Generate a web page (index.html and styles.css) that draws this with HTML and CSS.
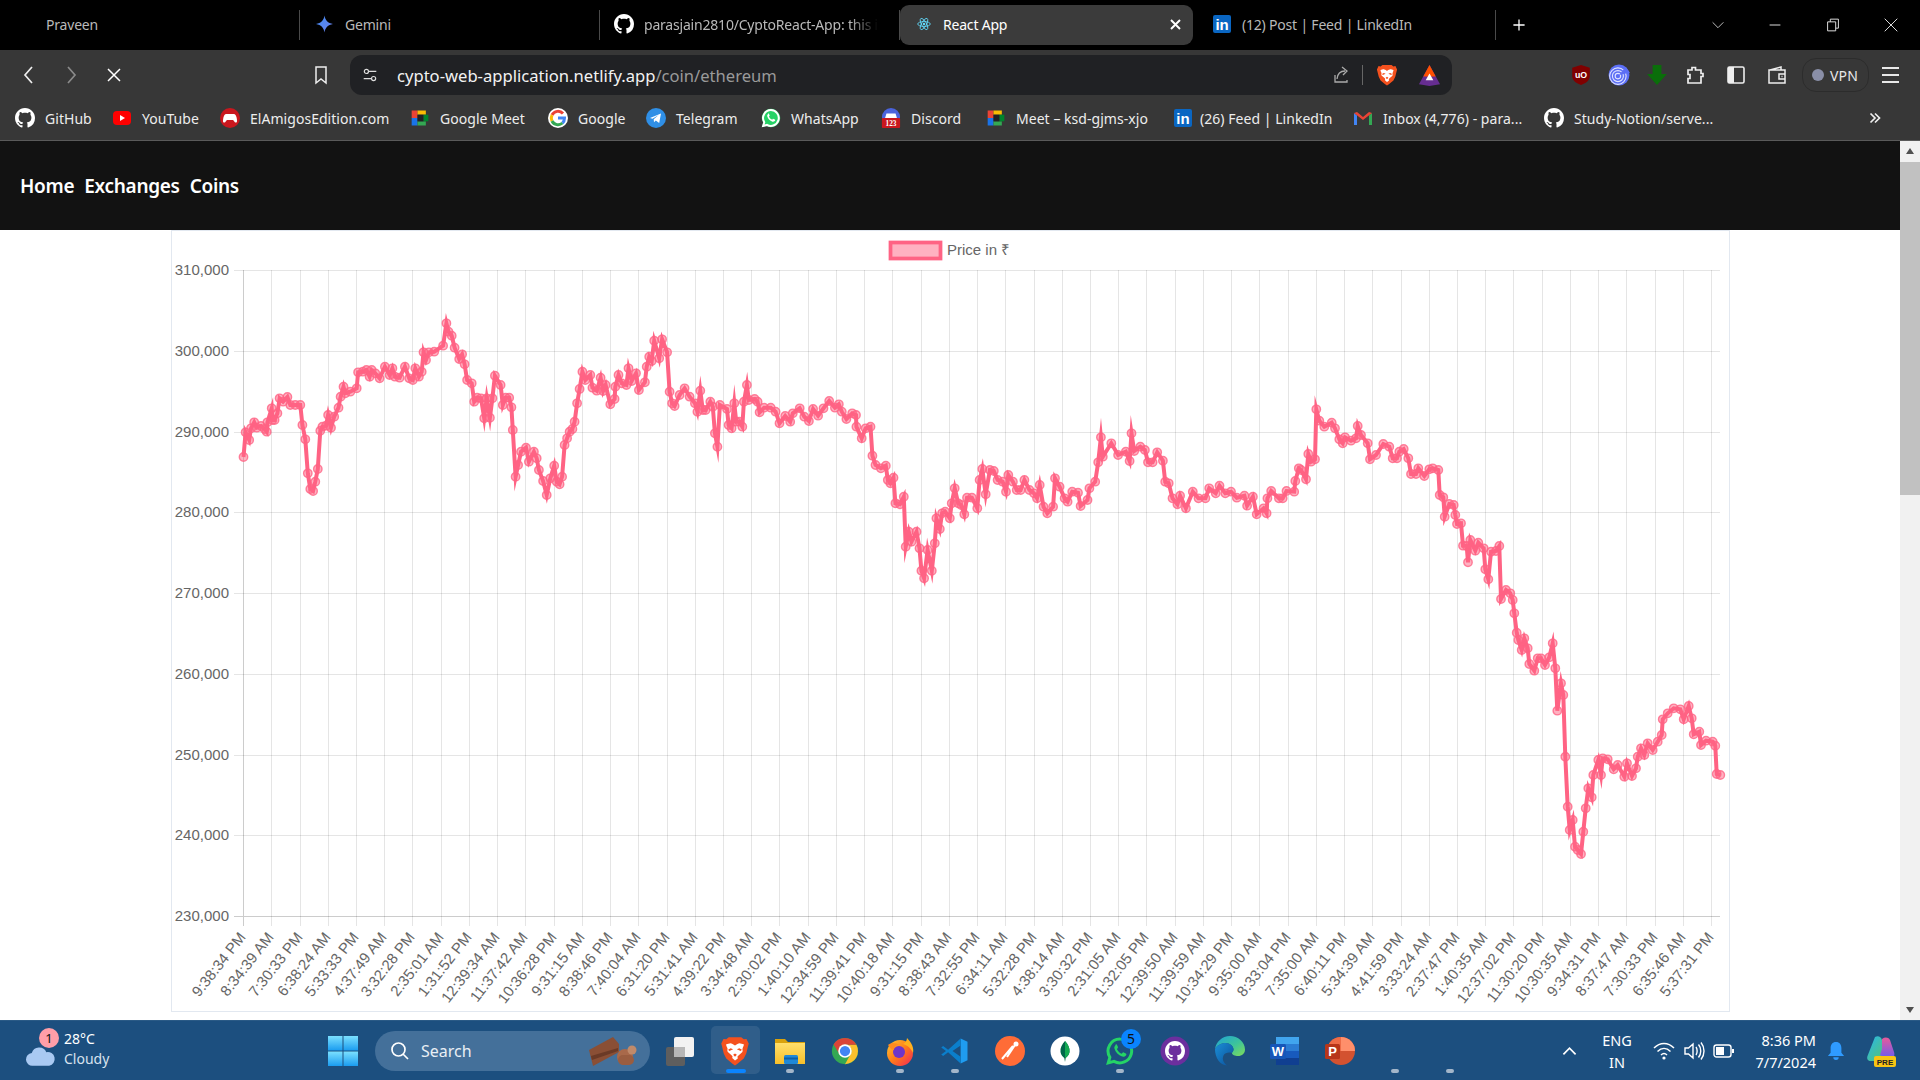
FILE: index.html
```html
<!DOCTYPE html>
<html lang="en">
<head>
<meta charset="utf-8">
<title>React App</title>
<link rel="stylesheet" href="styles.css">
</head>
<body>
<svg class="sprite" aria-hidden="true">
  <defs>
    <linearGradient id="gem" x1="0" y1="0" x2="1" y2="1"><stop offset="0" stop-color="#3f8cf5"/><stop offset="1" stop-color="#6f7fe8"/></linearGradient>
    <linearGradient id="fox" x1="0" y1="0" x2="1" y2="1"><stop offset="0" stop-color="#ffcb2e"/><stop offset=".5" stop-color="#ff7a1a"/><stop offset="1" stop-color="#f0245a"/></linearGradient>
    <linearGradient id="edge" x1="0" y1="0" x2="1" y2="1"><stop offset="0" stop-color="#1fa2d8"/><stop offset=".55" stop-color="#3dc49a"/><stop offset="1" stop-color="#7fdc5a"/></linearGradient>
    <linearGradient id="edge2" x1="0" y1="0" x2="1" y2="1"><stop offset="0" stop-color="#1b8fd6"/><stop offset="1" stop-color="#0b4f9a"/></linearGradient>
    <linearGradient id="win" x1="0" y1="0" x2="0" y2="1"><stop offset="0" stop-color="#7be0ff"/><stop offset="1" stop-color="#1a9cf0"/></linearGradient>
    <linearGradient id="folder" x1="0" y1="0" x2="0" y2="1"><stop offset="0" stop-color="#ffdf6b"/><stop offset="1" stop-color="#f7bf2a"/></linearGradient>
    <linearGradient id="copiL" x1="0" y1="0" x2="1" y2="1"><stop offset="0" stop-color="#25b8f0"/><stop offset="1" stop-color="#5ac36a"/></linearGradient>
    <linearGradient id="copiR" x1="0" y1="0" x2="0" y2="1"><stop offset="0" stop-color="#e85a9a"/><stop offset="1" stop-color="#6b5cf0"/></linearGradient>
    <symbol id="i-github" viewBox="0 0 16 16"><path fill="currentColor" d="M8 0C3.58 0 0 3.58 0 8c0 3.54 2.29 6.53 5.47 7.59.4.07.55-.17.55-.38 0-.19-.01-.82-.01-1.49-2.01.37-2.53-.49-2.69-.94-.09-.23-.48-.94-.82-1.13-.28-.15-.68-.52-.01-.53.63-.01 1.08.58 1.23.82.72 1.21 1.87.87 2.33.66.07-.52.28-.87.51-1.07-1.78-.2-3.64-.89-3.64-3.95 0-.87.31-1.59.82-2.15-.08-.2-.36-1.02.08-2.12 0 0 .67-.21 2.2.82.64-.18 1.32-.27 2-.27.68 0 1.36.09 2 .27 1.53-1.04 2.2-.82 2.2-.82.44 1.1.16 1.92.08 2.12.51.56.82 1.27.82 2.15 0 3.07-1.87 3.75-3.65 3.95.29.25.54.73.54 1.48 0 1.07-.01 1.93-.01 2.2 0 .21.15.46.55.38A8.013 8.013 0 0016 8c0-4.42-3.58-8-8-8z"/></symbol>
    <symbol id="i-linkedin" viewBox="0 0 20 20"><rect x="1" y="1" width="18" height="18" rx="2" fill="#0a66c2"/><text x="10" y="16" class="svg-in">in</text></symbol>
    <symbol id="i-brave" viewBox="0 0 24 24"><path fill="#f4511e" d="M7 1h10l2 1.6 2.2-.3L23 6l-.7 2.6L21 14l-2 4-5 4.2-2 1.3-2-1.3L5 18l-2-4-1.3-5.4L1 6l1.8-3.7 2.2.3z"/><path fill="#fff" d="M12 7.5c1.2-.6 2.8-1.7 3.6-1.7.8 0 2.5.7 3.4.8.3.6-.4 2-.9 3.2-.5 1.2.6 2-.4 3.2l-2.7 2.4-1 1 .2 1.5L12 19.5l-2.2-1.9.2-1.5-1-1-2.7-2.4c-1-1.2.1-2-.4-3.2C5.4 8.6 4.7 7.2 5 6.6c.9-.1 2.6-.8 3.4-.8.8 0 2.4 1.1 3.6 1.7z"/><path fill="#f4511e" d="M10.5 10.5l-3 1.5-1-1 2-1.2zM13.5 10.5l3 1.5 1-1-2-1.2zM10.5 15l1.5-1 1.5 1-1.5 1.5z"/></symbol>
    <symbol id="i-wa" viewBox="0 0 24 24"><path fill="none" stroke="currentColor" stroke-width="2.4" d="M12 2.5a9.5 9.5 0 0 0-8.100 14.500L2.600 21.500l4.600-1.200A9.500 9.500 0 1 0 12 2.500z"/><path fill="currentColor" d="M8.600 7.200c-.9.700-1.400 1.800-1 3 .8 2.800 3.200 5.300 6.100 6.200 1.400.4 2.700-.2 3.300-1.300.3-.5 0-.9-.4-1.200l-1.600-.8c-.5-.2-.8 0-1.100.4l-.5.6c-2-.8-3.100-2-3.900-3.800l.6-.6c.3-.4.4-.7.2-1.100l-.8-1.600c-.3-.5-.6-.5-.9-.8z"/></symbol>
    <symbol id="i-meet" viewBox="0 0 24 24"><rect x="2" y="3" width="7" height="9" fill="#ea4335"/><rect x="2" y="12" width="7" height="9" fill="#1a73e8"/><rect x="9" y="3" width="10" height="5" fill="#fbbc04"/><rect x="9" y="16" width="10" height="5" fill="#34a853"/><rect x="16" y="8" width="6" height="8" fill="#00832d"/><rect x="9" y="8" width="7" height="8" fill="#202124"/></symbol>
    <symbol id="i-x" viewBox="0 0 20 20"><path fill="none" stroke="currentColor" d="M4 4l12 12M16 4L4 16"/></symbol>
    <symbol id="i-chrome" viewBox="0 0 24 24"><circle cx="12" cy="12" r="10.5" fill="#34a853"/><path fill="#fbc02d" d="M12 7h9.100A10.500 10.500 0 0 1 12 22.500l4.400-8A5 5 0 0 0 12 7z"/><path fill="#db4437" d="M2.900 6.800A10.500 10.500 0 0 1 21.100 7H12a5 5 0 0 0-4.400 7.500z"/><circle cx="12" cy="12" r="5.4" fill="#fff"/><circle cx="12" cy="12" r="4.100" fill="#4285f4"/></symbol>
  </defs>
</svg>

<div class="tabstrip">
  <div class="tab tab-profile"><span class="tab-title">Praveen</span></div>
  <div class="tab">
    <svg class="ico18" viewBox="0 0 18 18"><path fill="url(#gem)" d="M9 0c.8 5 3.500 8 9 9-5.500 1-8.200 4-9 9-.8-5-3.500-8-9-9 5.500-1 8.200-4 9-9z"/></svg>
    <span class="tab-title">Gemini</span>
  </div>
  <div class="tab tab-gh">
    <svg class="ico20 white"><use href="#i-github"/></svg>
    <span class="tab-title fade">parasjain2810/CyptoReact-App: this i</span>
  </div>
  <div class="tab tab-active">
    <svg class="ico14" viewBox="0 0 20 20"><g fill="none" stroke="#61dafb" stroke-width="1.2"><ellipse cx="10" cy="10" rx="9" ry="3.500"/><ellipse cx="10" cy="10" rx="9" ry="3.500" transform="rotate(60 10 10)"/><ellipse cx="10" cy="10" rx="9" ry="3.500" transform="rotate(120 10 10)"/></g><circle cx="10" cy="10" r="1.800" fill="#61dafb"/></svg>
    <span class="tab-title">React App</span>
    <svg class="tab-close"><use href="#i-x"/></svg>
  </div>
  <div class="tab tab-li">
    <svg class="ico20"><use href="#i-linkedin"/></svg>
    <span class="tab-title">(12) Post | Feed | LinkedIn</span>
  </div>
  <svg class="newtab" viewBox="0 0 20 20"><path fill="none" stroke="#fff" stroke-width="1.6" d="M10 3v14M3 10h14"/></svg>
  <div class="winctl">
    <svg viewBox="0 0 20 20"><path fill="none" stroke="#bbb" stroke-width="1.1" d="M4 7l6 6 6-6"/></svg>
    <svg viewBox="0 0 20 20"><path fill="none" stroke="#ddd" stroke-width="1.1" d="M4 10h12"/></svg>
    <svg viewBox="0 0 20 20"><path fill="none" stroke="#ddd" stroke-width="1.1" d="M4 6.500h9v10H4zM7 6.500V3.500h9v10h-3"/></svg>
    <svg viewBox="0 0 20 20"><path fill="none" stroke="#ddd" stroke-width="1.1" d="M3 3l14 14M17 3L3 17"/></svg>
  </div>
</div>

<div class="toolbar">
  <div class="navbtn"><svg viewBox="0 0 20 20"><path fill="none" stroke="#eee" stroke-width="1.7" d="M13 2L6 10l7 8"/></svg></div>
  <div class="navbtn"><svg viewBox="0 0 20 20"><path fill="none" stroke="#8a8a8a" stroke-width="1.7" d="M7 2l7 8-7 8"/></svg></div>
  <div class="navbtn navstop"><svg class="white"><use href="#i-x"/></svg></div>
  <div class="navbtn bookmark"><svg viewBox="0 0 20 20"><path fill="none" stroke="#eee" stroke-width="1.5" d="M5 2h10v16l-5-4-5 4z"/></svg></div>
  <div class="omnibox">
    <svg class="tune" viewBox="0 0 20 20"><g fill="none" stroke="#ddd" stroke-width="1.3"><circle cx="6" cy="6" r="2.300"/><path d="M8.500 6H17M3 14h8.500"/><circle cx="14" cy="14" r="2.300"/></g></svg>
    <span class="url">cypto-web-application.netlify.app<span class="url-path">/coin/ethereum</span></span>
    <svg class="share" viewBox="0 0 20 20"><path fill="none" stroke="#aaa" stroke-width="1.3" d="M4 10v7h12v-2M6 14c.5-5 3.500-8 8-8M11 2l5 4-4 4"/></svg>
    <span class="omni-sep"></span>
    <svg class="brave-omni"><use href="#i-brave"/></svg>
    <svg class="bat" viewBox="0 0 24 24"><path fill="#662d91" d="M12 1L1 21l11 2 11-2z"/><path fill="#ff5000" d="M12 1L5.500 13h13z"/><path fill="#fff" d="M12 10l-4 7h8z"/></svg>
  </div>
  <div class="exts">
    <div class="ext"><svg class="ext-big" viewBox="0 0 20 20"><path fill="#800000" d="M10 1l8 2.500V11c0 4-4 7-8 8-4-1-8-4-8-8V3.500z"/><text x="10" y="13" class="svg-ub">uO</text></svg></div>
    <div class="ext"><svg class="ext-big" viewBox="0 0 20 20"><circle cx="10" cy="10" r="9.500" fill="#5b6ef5"/><g fill="none" stroke="#dfe3ff" stroke-width="1"><circle cx="9" cy="11" r="2.500"/><circle cx="9" cy="11" r="5"/><circle cx="9" cy="11" r="7.500"/></g><path fill="#5b6ef5" d="M10 10l6-7 4 5z"/></svg></div>
    <div class="ext"><svg class="ext-big" viewBox="0 0 20 20"><path fill="#0a6e0a" d="M6 1h8v8h5l-9 10L1 9h5z"/></svg></div>
    <div class="ext"><svg viewBox="0 0 20 20"><path fill="none" stroke="#eee" stroke-width="1.7" d="M3 5h4V2.500h3.500V5H16v3.500h2v3h-2V18H3v-4.500h2v-4H3z"/></svg></div>
    <div class="ext ext-wide"><svg viewBox="0 0 20 20"><rect x="2" y="2" width="16" height="16" rx="1.500" fill="none" stroke="#eee" stroke-width="1.6"/><rect x="2" y="2" width="6" height="16" fill="#eee"/></svg></div>
    <div class="ext ext-wide"><svg viewBox="0 0 20 20"><path fill="none" stroke="#eee" stroke-width="1.5" d="M2 5h16v13H2zM3 5l11-3v3M18 9h-6v5h6M14.500 11.500h1"/></svg></div>
    <div class="vpn"><span class="vpn-dot"></span>VPN</div>
    <div class="menu"><span></span><span></span><span></span></div>
  </div>
</div>

<div class="bookmarks">
  <a class="bm"><svg class="white"><use href="#i-github"/></svg>GitHub</a>
  <a class="bm"><svg viewBox="0 0 20 20"><rect x="1" y="3" width="18" height="14" rx="4" fill="#f00"/><path fill="#fff" d="M8 7l5 3-5 3z"/></svg>YouTube</a>
  <a class="bm"><svg viewBox="0 0 20 20"><circle cx="10" cy="10" r="10" fill="#c9171e"/><path fill="#fff" d="M6 6h8c2 0 3 4 3 7 0 2-2 2-3 0l-1-1H7l-1 1c-1 2-3 2-3 0 0-3 1-7 3-7z"/></svg>ElAmigosEdition.com</a>
  <a class="bm"><svg><use href="#i-meet"/></svg>Google Meet</a>
  <a class="bm"><svg viewBox="0 0 20 20"><circle cx="10" cy="10" r="10" fill="#fff"/><g fill="none" stroke-width="3"><path stroke="#ea4335" d="M15 5.600A6.700 6.700 0 0 0 4 7"/><path stroke="#fbbc04" d="M4 7a6.700 6.700 0 0 0 0 6"/><path stroke="#34a853" d="M4 13a6.700 6.700 0 0 0 10.500 2"/><path stroke="#4285f4" d="M14.500 15c1.500-1.200 2-3 2-5H10"/></g></svg>Google</a>
  <a class="bm"><svg viewBox="0 0 20 20"><circle cx="10" cy="10" r="10" fill="#2f8fe6"/><path fill="#fff" d="M4 10l11-4.500-1.800 9.500-3.400-2.500-1.800 1.700-.3-3 5-4.200-6.200 3.700z"/></svg>Telegram</a>
  <a class="bm"><svg class="wa-bm" viewBox="0 0 24 24"><path fill="#25d366" d="M12 1a11 11 0 0 0-9.400 16.700L1 23l5.500-1.500A11 11 0 1 0 12 1z"/><use href="#i-wa" class="wa-white"/></svg>WhatsApp</a>
  <a class="bm"><svg viewBox="0 0 20 22"><circle cx="10" cy="10" r="10" fill="#4a63dc"/><path fill="#fff" d="M5 6h10l1.500 5H3.500z"/><rect x="0" y="11" width="20" height="11" rx="1" fill="#c9171e"/><text x="10" y="20" class="svg-123">123</text></svg>Discord</a>
  <a class="bm"><svg><use href="#i-meet"/></svg>Meet – ksd-gjms-xjo</a>
  <a class="bm bm-tight"><svg><use href="#i-linkedin"/></svg>(26) Feed | LinkedIn</a>
  <a class="bm"><svg viewBox="0 0 20 20"><path fill="#4285f4" d="M1 5l3 2.500V17H1z"/><path fill="#34a853" d="M16 7.500L19 5v12h-3z"/><path fill="#ea4335" d="M4 4l6 5 6-5 3 1-9 7-9-7z"/></svg>Inbox (4,776) - para...</a>
  <a class="bm"><svg class="white"><use href="#i-github"/></svg>Study-Notion/serve...</a>
  <svg class="bm-more" viewBox="0 0 14 14"><path fill="none" stroke="#eee" stroke-width="1.7" d="M2.500 2.500L7 7l-4.500 4.500M7 2.500L11.500 7 7 11.500"/></svg>
</div>

<div class="viewport">
  <main class="page">
    <nav class="site-nav">
      <a>Home</a><a>Exchanges</a><a>Coins</a>
    </nav>
    <section class="chart-card">
      <svg class="chart" viewBox="171 231 1557 780">
        <defs>
          <marker id="pt" markerUnits="userSpaceOnUse" markerWidth="14" markerHeight="14" refX="7" refY="7"><circle cx="7" cy="7" r="4.200" fill="#ff6384" fill-opacity=".5" stroke="#ff6384" stroke-opacity=".8" stroke-width="1.4"/></marker>
        </defs>
        <rect class="legend-box" x="889.5" y="242.5" width="50" height="16"/>
        <text class="legend-label" x="946" y="249">Price in ₹</text>

        <path class="grid" d="M270.500 270V926M299.500 270V926M327.500 270V926M355.500 270V926M383.500 270V926M411.500 270V926M440.500 270V926M468.500 270V926M496.500 270V926M524.500 270V926M553.500 270V926M581.500 270V926M609.500 270V926M637.500 270V926M666.500 270V926M694.500 270V926M722.500 270V926M750.500 270V926M778.500 270V926M807.500 270V926M835.500 270V926M863.500 270V926M891.500 270V926M920.500 270V926M948.500 270V926M976.500 270V926M1004.500 270V926M1033.500 270V926M1061.500 270V926M1089.500 270V926M1117.500 270V926M1145.500 270V926M1174.500 270V926M1202.500 270V926M1230.500 270V926M1258.500 270V926M1287.500 270V926M1315.500 270V926M1343.500 270V926M1371.500 270V926M1400.500 270V926M1428.500 270V926M1456.500 270V926M1484.500 270V926M1512.500 270V926M1541.500 270V926M1569.500 270V926M1597.500 270V926M1625.500 270V926M1654.500 270V926M1682.500 270V926M1710.500 270V926"/>
        <path class="grid" d="M233 270.500H1719M233 351.500H1719M233 432.500H1719M233 512.500H1719M233 593.500H1719M233 674.500H1719M233 755.500H1719M233 835.500H1719"/>
        <path class="axis" d="M242.500 270V926M233 916.500H1719"/>

        <g class="y-labels">
          <text x="228" y="269.5">310,000</text>
          <text x="228" y="350.5">300,000</text>
          <text x="228" y="431">290,000</text>
          <text x="228" y="511.5">280,000</text>
          <text x="228" y="592">270,000</text>
          <text x="228" y="673">260,000</text>
          <text x="228" y="754">250,000</text>
          <text x="228" y="834">240,000</text>
          <text x="228" y="915">230,000</text>
        </g>

        <polyline class="line" points="242.500,457 244.600,432.300 248.200,440 250,428.300 253.200,422.300 255.700,427.700 260,426 263.600,429 265.700,431.700 266.400,422.300 270.700,408.300 271.400,420 273.600,420 276.400,413.300 278.600,398.300 282.100,401.700 286.400,397 289.300,405 294.300,405 299.300,405 301.400,425 304.300,439.300 306.800,473.300 309.300,489 312.100,491 314.300,481.700 316.800,469 319.300,430.700 321.400,426.700 325,425.700 327.100,415 330,427.700 333.200,416.700 337.500,407.700 339.600,396.700 342.500,386.700 344.300,393.300 349.300,391.700 355.700,388.300 357.100,372.300 361.800,371.700 365.400,370 368.600,376.700 370.700,370 374.300,373.300 378.600,378.300 383.900,366.700 388.600,375 391.400,368.300 393.900,376.700 398.600,377.700 403.900,366.700 408.200,378.300 411.800,380 414.300,368.300 417.900,376.700 420.700,371.700 422.500,352.300 425,360 427.900,352.300 433.200,351.700 442.100,345.700 445.400,323.300 447.500,331.700 450.700,335.700 453.600,347.700 458.200,359 461.100,354.300 463.600,364.300 466.100,380 470.700,383.300 473.200,401.700 476.100,397.700 480,398.300 483.200,418.300 485.700,398.300 488.900,417.700 491.400,398.300 493.900,375.700 499.600,385 501.800,405 504.600,397.700 508.200,397.700 510.400,407.300 511.800,430 514.600,476.700 517.100,465 520,451.700 525,447.700 527.900,461.700 532.900,451.700 535.700,458.300 537.900,470 542.100,481 545.700,495 549.300,478.300 553.200,465.700 555.700,481.700 558.600,484.300 561.100,476.700 563.600,445 566.100,438.300 568.600,431.700 571.400,429 573.600,421.700 576.100,403.300 578.600,389 581.400,371.700 584.300,380 589.300,375 591.400,387.700 595.700,390.700 599.600,377.700 602.100,391 604.600,385 609.300,404.300 613.600,399 614.300,386.700 617.500,375 620.700,383.300 625.400,385 627.500,368.300 630.700,381 635,373.300 637.900,390 643.900,382.300 645.700,366.700 648.200,356.700 650.700,361 653.200,340.700 658.200,358.300 661.100,339.300 666.100,352.300 668.600,391.700 671.100,403.300 673.600,406 678.600,395 683.600,388.300 688.600,396.700 693.900,403.300 696.400,411.700 699.300,390.700 701.800,410 704.600,410 709.300,401.700 711.800,406.700 713.900,433.300 716.400,446.700 718.900,405 726,409 727.600,425 730.600,428.300 733.300,403.300 735.200,421.700 738.300,421.700 741.300,426.700 742.900,401.700 745.900,385 747.800,400 753.600,399 756.600,401.700 758.600,412.300 763.100,407.700 769.700,407.700 774.600,411.700 778.500,423.300 784.200,416 789.200,421.700 791.800,413.300 798.700,408.300 803.300,416.700 807.900,421 812.100,409 817.100,415.700 822.500,408.300 828.200,401 833.900,407.700 837.800,404.300 840.800,411.700 845.400,419 851.200,413.300 855,415 855.400,426.700 860.700,438.300 864.600,428.300 869.500,426.700 871.400,455.700 874.500,465 879.900,468.300 884.800,465.700 886.800,480 889.400,483.300 892.500,477.700 894.400,503.300 899,504.300 902.800,496.700 904.700,546.700 907.800,531.700 910.500,541.700 915.500,531.700 918.500,548.300 920.400,570.700 923.100,578.300 926.600,550 930.800,570.700 933.800,543.300 935.400,518.300 938.800,529 941.100,513.300 944.200,511.700 948.800,518.300 950.700,503.300 953.700,488.300 957.200,503.300 960.200,505 963.300,514.300 966,497.700 970.900,497.700 976.300,508.300 978.600,480 981.300,469 984.700,494.300 988.900,470 992.800,471 996.600,480 1001.600,481.700 1005,491.700 1007.300,475 1011.900,481.700 1015.700,490 1019.600,490 1023.400,480 1028.400,490 1033,493.300 1036,498.300 1038.700,485 1042.500,506.700 1046.300,513.300 1052.100,506.700 1054,478.300 1058.600,486.700 1063.600,498.300 1066.600,501.700 1071.200,491.700 1077,492.700 1079.600,506 1086.500,500 1088.400,488.300 1094.200,481.700 1097.200,462.300 1099.900,437.300 1101.800,456.700 1110.300,443.300 1117.100,455 1124.800,451.700 1128.600,461 1130.500,433.300 1133.200,451 1139.300,446.700 1143.900,450 1147,462.300 1151.600,462.300 1156.200,452.300 1161.900,460.700 1164.200,481.700 1167.700,483.300 1171.500,498.300 1176.400,504.300 1179.100,495.700 1184.900,508.300 1191.800,491.700 1197.500,498.300 1204.400,498.300 1208.200,488.300 1214.700,493.300 1218.500,485.700 1224.300,493.300 1230,491.700 1235.800,497.700 1243.400,495.700 1246.100,505.700 1251.900,496.700 1255.700,514.300 1262.600,508.300 1265.600,513.300 1266.400,498.300 1270.200,491 1277.900,498.300 1281.700,498.300 1285.500,491 1293.200,491.700 1294.300,481 1297.800,468.300 1300,470 1305,479.300 1307.300,454 1310,461.700 1314,459.300 1315.300,409.300 1318.300,420.700 1323.300,426.700 1330.700,422.700 1334,428.300 1338.300,439.300 1341.700,443.300 1344,437.300 1350,440.700 1355,438.300 1356.700,426 1360,435 1366.700,443.300 1369,459.300 1375,455 1382.300,444 1388.300,446.700 1391.700,458.300 1396,458.300 1398.300,451.700 1402.700,449 1407.300,458.300 1410,474 1415,474 1417.300,468.300 1423.300,476 1428.300,469.300 1431.700,468.300 1437.300,470 1438.700,495 1442.300,497.300 1443.700,516.700 1448.300,504 1452.700,505 1454.300,515 1456,524 1460,523.300 1462,545.700 1465.700,546 1467,562.300 1469.300,540 1474.300,550.700 1477.300,542.700 1482.700,548.300 1484.300,569.300 1487.300,579.300 1490,551.700 1495,551 1498.300,546 1500,599 1505,590 1509.300,593.300 1511.700,600 1513.300,613.300 1515.700,632.700 1517.300,640 1520.700,650 1523.300,638.300 1526.700,648.300 1528.300,664 1533.300,670.700 1536.700,658.300 1540,658.300 1544,665 1548.300,657.300 1551.700,643.300 1554.300,668.300 1556.300,710.700 1560,683.300 1562.300,695 1564.300,756.700 1566.700,806.700 1568.700,830 1571.700,820 1574,846.700 1576.700,850 1580,854 1582.300,831.700 1584.700,808.300 1587.300,788.300 1590.700,797.300 1592.300,775 1597.300,760 1600,775 1601.700,758.300 1606.700,759.300 1612.700,769.300 1616.700,765 1623.300,776.700 1626,763.300 1631,776 1635,768.300 1636.700,756.700 1640,748.300 1643.300,755 1646.700,743.300 1651.700,750 1656.700,741.700 1660.700,735 1661.700,719.300 1666.700,713.300 1672.700,708.300 1679.300,709.300 1682.700,719.300 1687.700,706 1690.700,718.300 1692.700,734.300 1698.300,731.700 1700,745 1705,740.700 1711.700,741.700 1714.300,745.700 1715.700,774 1719.300,775"/>

        <g class="x-labels">
          <text transform="translate(241 934) rotate(-52)">9:38:34 PM</text>
          <text transform="translate(269 934) rotate(-52)">8:34:39 AM</text>
          <text transform="translate(298 934) rotate(-52)">7:30:33 PM</text>
          <text transform="translate(326 934) rotate(-52)">6:38:24 AM</text>
          <text transform="translate(354 934) rotate(-52)">5:33:33 PM</text>
          <text transform="translate(382 934) rotate(-52)">4:37:49 AM</text>
          <text transform="translate(410 934) rotate(-52)">3:32:28 PM</text>
          <text transform="translate(439 934) rotate(-52)">2:35:01 AM</text>
          <text transform="translate(467 934) rotate(-52)">1:31:52 PM</text>
          <text transform="translate(495 934) rotate(-52)">12:39:34 AM</text>
          <text transform="translate(523 934) rotate(-52)">11:37:42 AM</text>
          <text transform="translate(552 934) rotate(-52)">10:36:28 PM</text>
          <text transform="translate(580 934) rotate(-52)">9:31:15 AM</text>
          <text transform="translate(608 934) rotate(-52)">8:38:46 PM</text>
          <text transform="translate(636 934) rotate(-52)">7:40:04 AM</text>
          <text transform="translate(665 934) rotate(-52)">6:31:20 PM</text>
          <text transform="translate(693 934) rotate(-52)">5:31:41 AM</text>
          <text transform="translate(721 934) rotate(-52)">4:39:22 PM</text>
          <text transform="translate(749 934) rotate(-52)">3:34:48 AM</text>
          <text transform="translate(777 934) rotate(-52)">2:30:02 PM</text>
          <text transform="translate(806 934) rotate(-52)">1:40:10 AM</text>
          <text transform="translate(834 934) rotate(-52)">12:34:59 PM</text>
          <text transform="translate(862 934) rotate(-52)">11:39:41 PM</text>
          <text transform="translate(890 934) rotate(-52)">10:40:18 AM</text>
          <text transform="translate(919 934) rotate(-52)">9:31:15 PM</text>
          <text transform="translate(947 934) rotate(-52)">8:38:43 AM</text>
          <text transform="translate(975 934) rotate(-52)">7:32:55 PM</text>
          <text transform="translate(1003 934) rotate(-52)">6:34:11 AM</text>
          <text transform="translate(1032 934) rotate(-52)">5:32:28 PM</text>
          <text transform="translate(1060 934) rotate(-52)">4:38:14 AM</text>
          <text transform="translate(1088 934) rotate(-52)">3:30:32 PM</text>
          <text transform="translate(1116 934) rotate(-52)">2:31:05 AM</text>
          <text transform="translate(1144 934) rotate(-52)">1:32:05 PM</text>
          <text transform="translate(1173 934) rotate(-52)">12:39:50 AM</text>
          <text transform="translate(1201 934) rotate(-52)">11:39:59 AM</text>
          <text transform="translate(1229 934) rotate(-52)">10:34:29 PM</text>
          <text transform="translate(1257 934) rotate(-52)">9:35:00 AM</text>
          <text transform="translate(1286 934) rotate(-52)">8:33:04 PM</text>
          <text transform="translate(1314 934) rotate(-52)">7:35:00 AM</text>
          <text transform="translate(1342 934) rotate(-52)">6:40:11 PM</text>
          <text transform="translate(1370 934) rotate(-52)">5:34:39 AM</text>
          <text transform="translate(1399 934) rotate(-52)">4:41:59 PM</text>
          <text transform="translate(1427 934) rotate(-52)">3:33:24 AM</text>
          <text transform="translate(1455 934) rotate(-52)">2:37:47 PM</text>
          <text transform="translate(1483 934) rotate(-52)">1:40:35 AM</text>
          <text transform="translate(1511 934) rotate(-52)">12:37:02 PM</text>
          <text transform="translate(1540 934) rotate(-52)">11:30:20 PM</text>
          <text transform="translate(1568 934) rotate(-52)">10:30:35 AM</text>
          <text transform="translate(1596 934) rotate(-52)">9:34:31 PM</text>
          <text transform="translate(1624 934) rotate(-52)">8:37:47 AM</text>
          <text transform="translate(1653 934) rotate(-52)">7:30:33 PM</text>
          <text transform="translate(1681 934) rotate(-52)">6:35:46 AM</text>
          <text transform="translate(1709 934) rotate(-52)">5:37:31 PM</text>
        </g>
      </svg>
    </section>
  </main>
  <aside class="scrollbar">
    <svg class="sb-arrow" viewBox="0 0 10 10"><path d="M5 2l4 6H1z"/></svg>
    <div class="sb-track"><div class="sb-thumb"></div></div>
    <svg class="sb-arrow" viewBox="0 0 10 10"><path d="M5 8L1 2h8z"/></svg>
  </aside>
</div>

<footer class="taskbar">
  <div class="weather">
    <svg class="cloud" viewBox="0 0 32 22"><path fill="#a9c9f2" d="M8 21a6.500 6.500 0 0 1-1-13 8 8 0 0 1 15-1 7 7 0 0 1 3 14z"/></svg>
    <span class="badge-pink">1</span>
    <div class="weather-text"><span>28°C</span><span>Cloudy</span></div>
  </div>
  <div class="app"><svg class="ico30" viewBox="0 0 30 30"><g fill="url(#win)"><rect x="0" y="0" width="14.5" height="14.5"/><rect x="15.5" y="0" width="14.5" height="14.5"/><rect x="0" y="15.5" width="14.5" height="14.5"/><rect x="15.5" y="15.5" width="14.5" height="14.5"/></g></svg></div>
  <div class="search">
    <svg class="mag" viewBox="0 0 20 20"><path fill="none" stroke="#fff" stroke-width="1.7" d="M13.500 13.500L18 18M15 8.500a6.500 6.500 0 1 1-13 0 6.500 6.500 0 0 1 13 0z"/></svg>
    <span>Search</span>
    <svg class="cake" viewBox="0 0 48 30"><path fill="#8a4f35" d="M0 14L24 1l6 7v8L4 30z"/><path fill="#6b3a26" d="M2 20l27-8v3L3 24z"/><circle cx="36" cy="21" r="8" fill="#a9694a"/><circle cx="43" cy="14" r="4.500" fill="#c08a6a"/><rect x="29" y="19" width="16" height="10" rx="5" fill="#9a5d40"/></svg>
  </div>
  <div class="app"><svg class="ico30" viewBox="0 0 30 30"><rect x="1" y="11" width="19" height="19" rx="2" fill="#5e5e5e"/><rect x="9" y="1" width="20" height="20" rx="2" fill="#f2f2f2"/><rect x="9" y="11" width="11" height="10" fill="#b7b7b7"/></svg></div>
  <div class="app app-active"><svg class="ico30"><use href="#i-brave"/></svg></div>
  <div class="app app-run"><svg class="ico30" viewBox="0 0 30 30"><path fill="#d9a20c" d="M0 3h10l3 3h17v6H0z"/><path fill="url(#folder)" d="M0 7h30v21H0z"/><rect x="9" y="19" width="14" height="9" rx="1.5" fill="#1e88d8"/><rect x="9" y="21.5" width="14" height="2" fill="#0b5fa8"/></svg></div>
  <div class="app"><svg class="ico30"><use href="#i-chrome"/></svg></div>
  <div class="app app-run"><svg class="ico30" viewBox="0 0 30 30"><circle cx="15" cy="17" r="13" fill="url(#fox)"/><path fill="#ffb01f" d="M22 2c5 5 7 10 6 15-2-5-6-8-10-9 2-1 4-3 4-6z"/><circle cx="14" cy="16" r="6" fill="#6e35c9"/><path fill="#ff8a1f" d="M3 9c4-3 8-2 11 0-3 0-5 2-5 5-2 0-4-2-6-5z"/></svg></div>
  <div class="app app-run"><svg class="ico30" viewBox="0 0 24 24"><path fill="#1f9cf0" d="M16.500 2L22 4.600v14.800L16.500 22z"/><path fill="#0b7fcc" d="M16.500 2l-10 9-4-3L1 9.200 4.800 12 1 14.800 2.500 16l4-3 10 9v-5.500L10 12l6.500-4.500z"/></svg></div>
  <div class="app"><svg class="ico30" viewBox="0 0 30 30"><circle cx="15" cy="15" r="15" fill="#ff6c37"/><path fill="none" stroke="#fff" stroke-width="2" d="M7 23l11-13M12 21l8-12"/><circle cx="21" cy="8" r="2.500" fill="#fff"/></svg></div>
  <div class="app"><svg class="ico30" viewBox="0 0 30 30"><circle cx="15" cy="15" r="14.5" fill="#fff"/><path fill="#00684a" d="M15 5c3 3 5 7 4.500 11-.3 3-2.500 5-3.800 6L15 26l-.7-4c-1.300-1-3.500-3-3.800-6C10 12 12 8 15 5z"/><path fill="#13aa52" d="M15 5c3 3 5 7 4.500 11-.3 3-2.500 5-4.500 6z"/></svg></div>
  <div class="app app-run"><svg class="ico30 wa-green"><use href="#i-wa"/></svg><span class="badge-blue">5</span></div>
  <div class="app"><svg class="ico30" viewBox="0 0 30 30"><circle cx="15" cy="15" r="14.5" fill="#6c2f9e"/><svg x="5" y="5" width="20" height="20" class="white"><use href="#i-github"/></svg></svg></div>
  <div class="app"><svg class="ico30" viewBox="0 0 30 30"><path fill="url(#edge)" d="M15 0c8 0 15 6 15 13.500 0 4-3 6.500-7 6.500-3 0-6-1-6-3 0-1 1.500-1.500 1.500-3.500C18.500 10 15 7 10.500 7 6 7 2 9.500 0 13 1 6 7 0 15 0z"/><path fill="url(#edge2)" d="M0 13c2-3.500 6-6 10.500-6 4.500 0 8 3 8 6.500 0 2-1.500 2.500-1.500 3.500-3-1-7-.5-8.500 2.500-1.500 3-.5 7 3.500 10C5 29 0 22 0 13z"/></svg></div>
  <div class="app"><svg class="ico30" viewBox="0 0 30 30"><rect x="6" y="1" width="23" height="28" rx="2" fill="#2b7cd3"/><rect x="6" y="1" width="23" height="7" fill="#41a5ee"/><rect x="6" y="15" width="23" height="7" fill="#185abd"/><rect x="6" y="22" width="23" height="7" fill="#103f91"/><rect x="0" y="8" width="16" height="15" rx="1.5" fill="#1656b8"/><text x="8" y="20" class="svg-office">W</text></svg></div>
  <div class="app"><svg class="ico30" viewBox="0 0 30 30"><circle cx="16" cy="15" r="14" fill="#d35230"/><path fill="#ff8f6b" d="M16 1a14 14 0 0 1 14 14H16z"/><path fill="#ed6c47" d="M16 1v14H2A14 14 0 0 1 16 1z"/><rect x="0" y="8" width="15" height="15" rx="1.5" fill="#b7361a"/><text x="7.5" y="20" class="svg-office">P</text></svg></div>
  <div class="app app-run"></div>
  <div class="app app-run"></div>
  <div class="tray">
    <svg class="tray-chev" viewBox="0 0 16 10"><path fill="none" stroke="#fff" stroke-width="1.8" d="M1.500 8.500L8 2l6.500 6.500"/></svg>
    <div class="lang"><span>ENG</span><span>IN</span></div>
    <svg class="tray-ico" viewBox="0 0 22 20"><g fill="none" stroke="#fff" stroke-width="1.5"><path d="M1 7c6-6 14-6 20 0M4.500 10.500c4-4 9-4 13 0M8 14c2-2 4-2 6 0"/></g><circle cx="11" cy="17" r="1.600" fill="#fff"/></svg>
    <svg class="tray-ico" viewBox="0 0 22 20"><g fill="none" stroke="#fff" stroke-width="1.4"><path d="M2 7h3.500L10 3v14l-4.500-4H2zM13 6c1.500 2 1.500 6 0 8M15.500 3.500c3 3.500 3 9.500 0 13M18 1.500c4 5 4 12 0 17"/></g></svg>
    <svg class="tray-ico" viewBox="0 0 22 20"><rect x="1" y="4" width="17" height="12" rx="2.500" fill="none" stroke="#fff" stroke-width="1.4"/><rect x="3" y="6" width="8" height="8" fill="#fff"/><rect x="19" y="8" width="2" height="4" fill="#fff"/></svg>
    <div class="clock"><span>8:36 PM</span><span>7/7/2024</span></div>
    <svg class="bell" viewBox="0 0 20 24"><path fill="#2f9bff" d="M10 2c4 0 6 3 6 7v5l3 3.500H1L4 14V9c0-4 2-7 6-7zM7 19h6a3 3 0 0 1-6 0z"/></svg>
    <svg class="copilot" viewBox="0 0 32 32"><path fill="url(#copiL)" d="M10 2c3-1.500 6-.5 7 3l3 9-4 9c-1 2-3 3-5 3H6c-3 0-4.500-2-3.500-5z"/><path fill="url(#copiR)" d="M17 4c3-2 6-2 8 1l4 12c1 3 0 6-3 6h-6l-5-3 2-6z"/><rect x="9" y="21" width="22" height="11" rx="2" fill="#f9c513"/><text x="20" y="29.500" class="svg-pre">PRE</text></svg>
  </div>
</footer>
</body>
</html>
```

FILE: styles.css
```css
* { box-sizing: border-box; }
html, body { margin: 0; padding: 0; }
body {
  width: 1920px; height: 1080px; overflow: hidden;
  display: flex; flex-direction: column;
  font-family: "Noto Sans", "Open Sans", sans-serif;
  background: #fff;
}
svg { display: block; flex: none; }
.sprite { position: absolute; width: 0; height: 0; }
.white { color: #fff; }

/* tab strip */
.tabstrip { height: 50px; background: #000; display: flex; align-items: center; flex: none; }
.tab {
  width: 300px; height: 30px; padding-left: 16px; padding-bottom: 2px;
  display: flex; align-items: center; gap: 12px;
  border-right: 1px solid #4a4a4a;
  color: #b9b9b9; font-size: 14px; letter-spacing: -.2px;
}
.tab-title { white-space: nowrap; }
.tab-profile { padding-left: 46px; }
.tab-gh { padding-left: 14px; gap: 10px; }
.tab-active {
  width: 293px; height: 40px; background: #3b3b3b; border: 0; border-radius: 9px;
  color: #fff; padding-left: 17px; margin-right: 3px;
}
.tab-li { gap: 10px; }
.fade { -webkit-mask-image: linear-gradient(90deg, #000 88%, transparent); mask-image: linear-gradient(90deg, #000 88%, transparent); }
.ico14 { width: 14px; height: 14px; }
.ico18 { width: 17px; height: 18px; }
.ico20 { width: 20px; height: 20px; }
.tab-close { width: 15px; height: 15px; margin-left: auto; margin-right: 10px; color: #fff; stroke-width: 2.6; }
.svg-in { fill: #fff; font: 700 15px "Liberation Sans", sans-serif; text-anchor: middle; }
.newtab { width: 16px; height: 16px; margin-left: 15px; }
.winctl { margin-left: auto; display: grid; grid-template-columns: 56px 58px 58px 58px; justify-items: center; }
.winctl svg { width: 18px; height: 18px; }

/* toolbar */
.toolbar { height: 50px; background: #373737; display: flex; align-items: center; padding-left: 8px; flex: none; }
.navbtn { width: 42px; height: 40px; display: flex; align-items: center; justify-content: center; }
.navbtn svg { width: 20px; height: 20px; }
.navstop { padding-left: 2px; stroke-width: 1.5; }
.bookmark { margin-left: 166px; }
.omnibox {
  margin-left: 8px; width: 1102px; height: 40px; background: #202124; border-radius: 12px;
  display: flex; align-items: center; padding-left: 11px;
}
.tune { width: 18px; height: 18px; }
.url { margin-left: 18px; color: #f2f2f2; font-size: 16.6px; white-space: nowrap; }
.url-path { color: #9a9a9a; }
.share { width: 20px; height: 20px; margin-left: auto; }
.omni-sep { width: 1px; height: 20px; background: #666; margin: 0 13px 0 11px; }
.brave-omni { width: 22px; height: 24px; }
.bat { width: 23px; height: 23px; margin: 0 11px 0 20px; }
.exts { display: flex; align-items: center; margin-left: 110px; }
.ext { width: 38px; display: flex; justify-content: center; }
.ext svg { width: 20px; height: 20px; }
.ext .ext-big { width: 22px; height: 22px; }
.ext-wide { margin-left: 3px; }
.svg-ub { fill: #fff; font: 700 8px "Liberation Sans", sans-serif; text-anchor: middle; }
.vpn {
  margin-left: 6px; width: 67px; height: 34px; border: 1px solid #2c2c2c; border-radius: 14px;
  display: flex; align-items: center; gap: 6px; padding-left: 9px;
  color: #e8e8e8; font-size: 14px; letter-spacing: .2px;
}
.vpn-dot { width: 12px; height: 12px; border-radius: 50%; background: #8a8fa8; }
.menu { margin-left: 13px; display: flex; flex-direction: column; gap: 5px; width: 17px; }
.menu span { height: 2px; background: #e8e8e8; }

/* bookmarks */
.bookmarks {
  height: 41px; flex: none; background: #373737; border-bottom: 1px solid #5a5a5a;
  display: grid; grid-template-columns: 97px 108px 190px 138px 98px 115px 120px 105px 187px 180px 191px 326px 20px;
  align-items: center; padding: 0 0 4px 15px;
  color: #ededed; font-size: 14px; letter-spacing: .04px;
}
.bm { display: flex; align-items: center; gap: 10px; white-space: nowrap; }
.bm svg { width: 20px; height: 20px; }
.bm-tight { gap: 7px; }
.bm-more { width: 14px; height: 14px; margin-left: -2px; }
.wa-white { color: #fff; }

/* page */
.viewport { flex: 1; display: flex; min-height: 0; }
.page { flex: 1; min-width: 0; display: flex; flex-direction: column; background: #fff; }
.site-nav {
  height: 89px; flex: none; background: #121212; display: flex; align-items: center; gap: 10px;
  padding-left: 20px; color: #fff; font-size: 19px; font-weight: 600; letter-spacing: -.3px;
}
.chart-card { width: 1559px; height: 782px; margin: 0 auto; border: 1px solid #e2e8f0; flex: none; }
.chart { width: 1557px; height: 780px; font-family: "Liberation Sans", Arial, sans-serif; font-size: 15px; fill: #666; }
.legend-box { fill: #ff6384; fill-opacity: .5; stroke: #ff6384; stroke-width: 3.75; }
.legend-label { dominant-baseline: central; }
.grid { fill: none; stroke: #000; stroke-opacity: .1; stroke-width: 1; shape-rendering: crispEdges; }
.axis { fill: none; stroke: #000; stroke-opacity: .2; stroke-width: 1; shape-rendering: crispEdges; }
.y-labels text { text-anchor: end; dominant-baseline: central; }
.x-labels text { text-anchor: end; dominant-baseline: central; }
.line {
  fill: none; stroke: #ff6384; stroke-width: 4; stroke-miterlimit: 10;
  marker-start: url(#pt); marker-mid: url(#pt); marker-end: url(#pt);
}

/* scrollbar */
.scrollbar { width: 20px; flex: none; background: #f1f1f1; display: flex; flex-direction: column; align-items: center; }
.sb-arrow { width: 10px; height: 20px; fill: #505050; }
.sb-track { flex: 1; width: 100%; }
.sb-thumb { width: 100%; height: 333px; margin-top: 1px; background: #c1c1c1; }

/* taskbar */
.taskbar {
  height: 60px; flex: none; background: #1c4f7f; border-top: 1px solid #2a5a86;
  display: flex; align-items: center; color: #fff;
}
.weather { width: 315.5px; position: relative; display: flex; align-items: center; height: 100%; padding-left: 25px; }
.cloud { width: 31px; height: 22px; margin-top: 10px; }
.badge-pink {
  position: absolute; left: 39px; top: 7px; width: 20px; height: 20px; border-radius: 50%;
  background: #ff9ea8; color: #111; font-size: 13px; text-align: center; line-height: 20px;
}
.weather-text { margin-left: 8px; margin-top: -3px; display: flex; flex-direction: column; font-size: 14px; line-height: 20px; }
.weather-text span:last-child { color: #d7e2ee; }
.app { width: 55px; height: 100%; display: flex; align-items: center; justify-content: center; position: relative; flex: none; }
.ico30 { width: 30px; height: 30px; }
.app-active::before {
  content: ""; position: absolute; left: 3px; right: 3px; top: 5px; bottom: 6px;
  background: rgba(255,255,255,.09); border-radius: 5px;
}
.app-active svg { position: relative; }
.app-active::after { content: ""; position: absolute; left: 18px; width: 20px; height: 4px; bottom: 7px; border-radius: 2px; background: #0a84ff; }
.app-run::after { content: ""; position: absolute; left: 23.5px; width: 8px; height: 4px; bottom: 7px; border-radius: 2px; background: #a3b6ca; }
.search {
  width: 275px; height: 40px; margin: 0 2.5px 0 4.5px; border-radius: 20px; flex: none;
  background: #44709a; display: flex; align-items: center; padding-left: 15px; gap: 11px;
  font-size: 16px; color: #e9eff5;
}
.mag { width: 20px; height: 20px; }
.cake { width: 48px; height: 30px; margin-left: auto; margin-right: 13px; }
.wa-green { color: #25d366; }
.badge-blue {
  position: absolute; left: 28.5px; top: 8px; width: 20px; height: 20px; border-radius: 50%;
  background: #0a84ff; color: #111; font-size: 14px; text-align: center; line-height: 20px;
}
.svg-office { fill: #fff; font: 700 13px "Liberation Sans", sans-serif; text-anchor: middle; }
.svg-123 { fill: #fff; font: 700 8px "Liberation Serif", serif; text-anchor: middle; }
.svg-pre { fill: #222; font: 700 8px "Liberation Sans", sans-serif; text-anchor: middle; }
.tray { margin-left: auto; display: flex; align-items: center; height: 100%; }
.tray-chev { width: 15px; height: 10px; margin-right: 20px; }
.lang { width: 40px; display: flex; flex-direction: column; align-items: center; font-size: 14.5px; line-height: 22px; margin-right: 16px; }
.tray-ico { width: 22px; height: 20px; margin-right: 8px; }
.clock { display: flex; flex-direction: column; align-items: flex-end; font-size: 14.5px; line-height: 22px; width: 73px; }
.bell { width: 18px; height: 22px; margin-left: 11px; }
.copilot { width: 32px; height: 32px; margin: 0 23px 0 20px; }
```
